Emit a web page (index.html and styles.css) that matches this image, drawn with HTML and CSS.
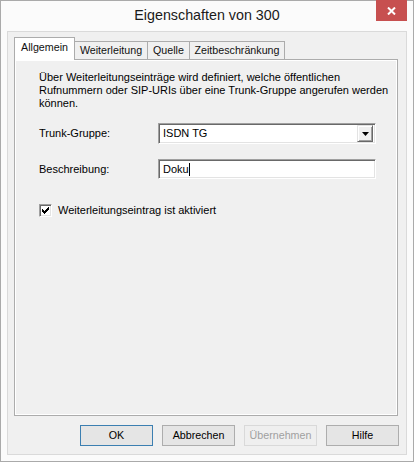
FILE: index.html
```html
<!DOCTYPE html>
<html lang="de">
<head>
<meta charset="utf-8">
<title>Eigenschaften von 300</title>
<link rel="stylesheet" href="styles.css">
</head>
<body>
<div class="window">
  <div class="titlebar">
    <span></span>
    <div class="title">Eigenschaften von 300</div>
    <div class="close">
      <svg width="9" height="8" viewBox="0 0 9 8"><path d="M1 0.5 L8 7.5 M8 0.5 L1 7.5" stroke="#fff" stroke-width="2"/></svg>
    </div>
  </div>
  <div class="client">
    <div class="tabs">
      <div class="tab tab-active w-allg">Allgemein</div>
      <div class="tab w-weit">Weiterleitung</div>
      <div class="tab w-quel">Quelle</div>
      <div class="tab w-zeit">Zeitbeschränkung</div>
    </div>
    <div class="panel">
      <p class="intro">Über Weiterleitungseinträge wird definiert, welche öffentlichen<br>Rufnummern oder SIP-URIs über eine Trunk-Gruppe angerufen werden<br>können.</p>
      <div class="form">
        <div class="row row-combo">
          <label class="lbl">Trunk-Gruppe:</label>
          <div class="combo">
            <span class="combo-text">ISDN TG</span>
            <span class="combo-btn"><svg width="7" height="4" viewBox="0 0 7 4"><path d="M0 0 H7 L3.5 4 Z" fill="#000"/></svg></span>
          </div>
        </div>
        <div class="row row-edit">
          <label class="lbl">Beschreibung:</label>
          <div class="edit"><span>Doku</span><span class="caret"></span></div>
        </div>
      </div>
      <div class="check-row">
        <span class="checkbox"><svg width="7" height="7" viewBox="0 0 7 7" shape-rendering="crispEdges"><path d="M0 2h1v3h-1z M1 3h1v3h-1z M2 4h1v3h-1z M3 3h1v3h-1z M4 2h1v3h-1z M5 1h1v3h-1z M6 0h1v3h-1z" fill="#000"/></svg></span>
        <span>Weiterleitungseintrag ist aktiviert</span>
      </div>
    </div>
    <div class="buttons">
      <div class="btn btn-default">OK</div>
      <div class="btn">Abbrechen</div>
      <div class="btn btn-disabled">Übernehmen</div>
      <div class="btn">Hilfe</div>
    </div>
  </div>
</div>
</body>
</html>
```

FILE: styles.css
```css
* { box-sizing: border-box; }
html, body { margin: 0; padding: 0; background: #fbfbfb; }
.window {
  width: 414px;
  height: 462px;
  border: 1px solid #aaaaaa;
  background: #fbfbfb;
  display: flex;
  flex-direction: column;
  font-family: "Liberation Sans", Arial, sans-serif;
  color: #000;
}
.titlebar {
  height: 30px;
  display: grid;
  grid-template-columns: 1fr auto 1fr;
  background: #fbfbfb;
}
.title {
  font-size: 14.3px;
  line-height: 29px;
  color: #1a1a1a;
}
.close {
  justify-self: end;
  align-self: start;
  margin-right: 6px;
  margin-top: -1px;
  width: 31px;
  height: 21px;
  background: #c75050;
  display: flex;
  align-items: center;
  justify-content: center;
}
.client {
  flex: 1;
  margin: 0 6px 6px 6px;
  border: 1px solid #dadada;
  background: #f0f0f0;
  display: flex;
  flex-direction: column;
  padding: 5px 8px 8px 6px;
}
.tabs {
  display: flex;
  align-items: flex-end;
  height: 22px;
  position: relative;
  z-index: 1;
}
.tab {
  height: 18px;
  border: 1px solid #acacac;
  border-bottom: none;
  background: #f0f0f0;
  font-size: 10.7px;
  line-height: 17px;
  text-align: center;
  margin-left: -1px;
  color: #111;
}
.tab-active {
  height: 23px;
  margin-bottom: -1px;
  margin-left: 0;
  background: #fff;
  line-height: 19px;
  padding-bottom: 3px;
}
.w-allg { width: 61px; }
.w-weit { width: 74px; }
.w-quel { width: 43px; }
.w-zeit { width: 96px; }
.panel {
  flex: 1;
  border: 1px solid #acacac;
  box-shadow: inset 0 0 0 1px #fff;
  background: #f0f0f0;
  padding: 11px 10px 0 24px;
  font-size: 11px;
  line-height: 13px;
}
.intro { margin: 0; white-space: nowrap; }
.form {
  display: flex;
  flex-direction: column;
  margin-top: 13px;
  gap: 15px;
}
.row {
  display: grid;
  grid-template-columns: 119px 218px;
  align-items: center;
}
.lbl { display: block; }
.combo, .edit, .checkbox {
  background: #fff;
  border-top: 1px solid #a0a0a0;
  border-left: 1px solid #a0a0a0;
  border-right: 1px solid #fff;
  border-bottom: 1px solid #fff;
  box-shadow: inset 1px 1px 0 #696969, inset -1px -1px 0 #e3e3e3;
}
.combo {
  height: 21px;
  display: flex;
  align-items: center;
  padding: 2px 2px 2px 4px;
}
.combo-text { flex: 1; }
.combo-btn {
  width: 16px;
  height: 17px;
  background: #f0f0f0;
  border-top: 1px solid #e3e3e3;
  border-left: 1px solid #e3e3e3;
  border-right: 1px solid #696969;
  border-bottom: 1px solid #696969;
  box-shadow: inset 1px 1px 0 #fff, inset -1px -1px 0 #a0a0a0;
  display: flex;
  align-items: center;
  justify-content: center;
}
.edit {
  height: 20px;
  display: flex;
  align-items: center;
  padding: 0 4px;
}
.caret {
  display: inline-block;
  width: 1px;
  height: 13px;
  background: #000;
}
.check-row {
  display: flex;
  align-items: center;
  gap: 6px;
  margin-top: 25px;
}
.checkbox {
  width: 13px;
  height: 13px;
  display: flex;
  align-items: center;
  justify-content: center;
}
.buttons {
  display: flex;
  justify-content: flex-end;
  gap: 9px;
  margin-top: 9px;
  margin-right: -1px;
}
.btn {
  width: 73px;
  height: 21px;
  border: 1px solid #adadad;
  background: #e5e5e5;
  font-size: 10.7px;
  line-height: 19px;
  text-align: center;
  color: #000;
}
.btn-default { border-color: #3c7fb1; }
.btn-disabled { border-color: #d9d9d9; background: #efefef; color: #a0a0a0; }
```
